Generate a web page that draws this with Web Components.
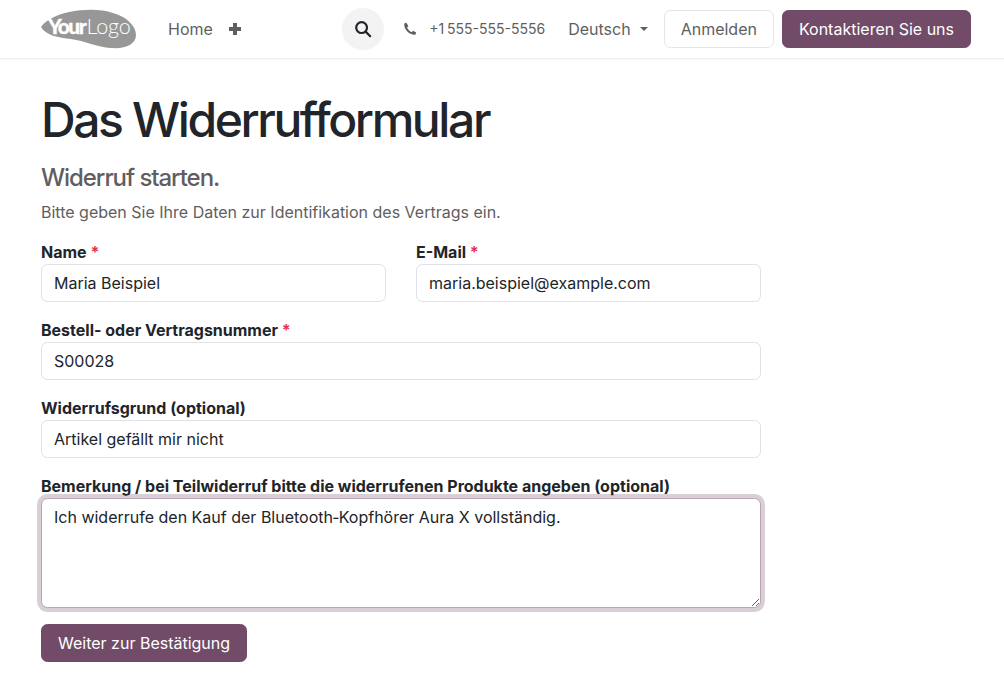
<!DOCTYPE html>
<html lang="de">
<head>
<meta charset="utf-8">
<title>Das Widerrufformular</title>
<style>
  html, body { margin: 0; background: #fff; }
  body { font-family: Inter, "Liberation Sans", sans-serif; color: #212529; }
</style>
</head>
<body>
<site-header></site-header>
<page-main>
  <h-title slot="head"></h-title>
  <form-field label="Name" required value="Maria Beispiel" slot="half"></form-field>
  <form-field label="E-Mail" required value="maria.beispiel@example.com" slot="half"></form-field>
  <form-field label="Bestell- oder Vertragsnummer" required value="S00028"></form-field>
  <form-field label="Widerrufsgrund (optional)" value="Artikel gefällt mir nicht"></form-field>
  <form-field label="Bemerkung / bei Teilwiderruf bitte die widerrufenen Produkte angeben (optional)" multiline value="Ich widerrufe den Kauf der Bluetooth‑Kopfhörer Aura X vollständig."></form-field>
  <brand-button slot="action">Weiter zur Bestätigung</brand-button>
</page-main>

<script>
class BrandButton extends HTMLElement {
  constructor() {
    super();
    this.attachShadow({ mode: 'open' });
    this.shadowRoot.innerHTML = `
      <style>
        :host { display: inline-block; }
        button {
          display: block;
          font: 400 16px/24px Inter, "Liberation Sans", sans-serif;
          height: 38px;
          padding: 0 16px;
          color: #fff;
          background: #714b67;
          border: 1px solid #714b67;
          border-radius: 6.4px;
          white-space: nowrap;
        }
      </style>
      <button type="button"><slot></slot></button>
    `;
  }
}
customElements.define('brand-button', BrandButton);

class SiteHeader extends HTMLElement {
  constructor() {
    super();
    this.attachShadow({ mode: 'open' });
    this.shadowRoot.innerHTML = `
      <style>
        :host {
          display: flex;
          align-items: center;
          box-sizing: border-box;
          height: 59px;
          padding: 0 33px 1px 41px;
          background: #fff;
          border-bottom: 1px solid #eeeeee;
          box-shadow: 0 1px 2px rgba(0, 0, 0, 0.03);
          font-size: 16px;
          color: #5f5e60;
        }
        .logo { display: block; width: 95px; height: 40px; }
        .logo text { font-family: Lato, Roboto, sans-serif; fill: #fff; }
        .home { margin-left: 32px; }
        .plus { margin-left: 15px; display: block; }
        .search {
          margin-left: auto;
          width: 42px;
          height: 42px;
          border-radius: 50%;
          background: #f3f3f3;
          display: flex;
          align-items: center;
          justify-content: center;
        }
        .phone { margin-left: 19px; display: flex; align-items: center; gap: 12px; font-size: 14px; word-spacing: -1px; }
        .lang { margin-left: 23px; display: flex; align-items: center; gap: 9px; }
        .caret { width: 0; height: 0; border: 4px solid transparent; border-top-color: #5f5e60; border-bottom: 0; }
        .login {
          margin-left: 16px;
          box-sizing: border-box;
          height: 38px;
          padding: 0 16px;
          display: flex;
          align-items: center;
          background: #fff;
          border: 1px solid #e5e5e5;
          border-radius: 6.4px;
        }
        brand-button { margin-left: 8px; }
      </style>
      <svg class="logo" viewBox="0 0 95 40" aria-label="Your Logo">
        <path d="M0 18 C4 12 14 6 28 3 C44 0 60 0 72 4 C86 8 95 17 95 26 C95 35 85 40 70 39 C56 38 44 32 30 30 C18 29 4 26 0 18 Z" fill="#979797"/>
        <text x="7" y="25"><tspan font-size="21" font-weight="900" letter-spacing="-1.6" stroke="#fff" stroke-width="0.3">Your</tspan><tspan dx="1.5" font-size="21.5" font-weight="300" letter-spacing="-0.1">Logo</tspan></text>
      </svg>
      <span class="home">Home</span>
      <svg class="plus" width="14" height="14" viewBox="0 0 14 14"><path d="M5 1h4v4h4v4H9v4H5V9H1V5h4z" fill="#5f5e60"/></svg>
      <span class="search">
        <svg width="18" height="18" viewBox="0 0 18 18" fill="none" stroke="#212529" stroke-width="2.2" stroke-linecap="round"><circle cx="7.6" cy="7.6" r="5.4"/><path d="M11.6 11.6l4.6 4.6"/></svg>
      </span>
      <span class="phone">
        <svg width="14" height="14" viewBox="0 0 14 14"><path d="M3.4.8 1.2 1.6C.8 7.6 6.2 13.2 12.4 12.8l.8-2.4-3.2-1.6-1.4 1.4C7 9.4 4.6 7 4 5.4l1.4-1.2z" fill="#5f5e60"/></svg>
        <span>+1 555-555-5556</span>
      </span>
      <span class="lang">Deutsch <i class="caret"></i></span>
      <span class="login">Anmelden</span>
      <brand-button>Kontaktieren Sie uns</brand-button>
    `;
  }
}
customElements.define('site-header', SiteHeader);

class HTitle extends HTMLElement {
  constructor() {
    super();
    this.attachShadow({ mode: 'open' });
    this.shadowRoot.innerHTML = `
      <style>
        :host { display: block; }
        h1 { margin: 0; font-size: 48px; line-height: 58px; font-weight: 500; letter-spacing: -2.4px; color: #212529; }
        h2 { margin: 14px 0 0; font-size: 24px; line-height: 29px; font-weight: 450; letter-spacing: -1.05px; color: #5f5e60; }
        p { margin: 8px 0 0; font-size: 16px; line-height: 24px; color: #5f5e60; }
      </style>
      <h1>Das Widerrufformular</h1>
      <h2>Widerruf starten.</h2>
      <p>Bitte geben Sie Ihre Daten zur Identifikation des Vertrags ein.</p>
    `;
  }
}
customElements.define('h-title', HTitle);

class FormField extends HTMLElement {
  constructor() {
    super();
    this.attachShadow({ mode: 'open' });
  }
  connectedCallback() {
    const label = this.getAttribute('label');
    const star = this.hasAttribute('required') ? ' <b>*</b>' : '';
    const multiline = this.hasAttribute('multiline');
    this.shadowRoot.innerHTML = `
      <style>
        :host { display: block; }
        label { display: block; font-size: 16px; font-weight: 700; line-height: 24px; color: #212529; white-space: nowrap; }
        label b { color: #e6334a; font-weight: 700; }
        input, textarea {
          display: block;
          box-sizing: border-box;
          width: 100%;
          margin: 0;
          font: 400 16px/24px Inter, "DejaVu Sans", sans-serif;
          color: #212529;
          background: #fff;
          border: 1px solid #dee2e6;
          border-radius: 6.4px;
          padding: 6px 12px;
          outline: none;
        }
        input { height: 38px; }
        textarea {
          height: 110px;
          border-color: #b8a5b3;
          box-shadow: 0 0 0 4px #d9cfd6;
        }
      </style>
      <label>${label}${star}</label>
      ${multiline ? '<textarea></textarea>' : '<input type="text">'}
    `;
    const control = this.shadowRoot.querySelector(multiline ? 'textarea' : 'input');
    if (multiline) control.textContent = this.getAttribute('value');
    else control.setAttribute('value', this.getAttribute('value'));
  }
}
customElements.define('form-field', FormField);

class PageMain extends HTMLElement {
  constructor() {
    super();
    this.attachShadow({ mode: 'open' });
    this.shadowRoot.innerHTML = `
      <style>
        :host { display: block; box-sizing: border-box; width: 802px; padding: 32px 41px 0; }
        .form { margin-top: 16px; display: flex; flex-direction: column; gap: 16px; }
        .half { display: grid; grid-template-columns: 1fr 1fr; gap: 30px; }
        .action { margin-top: 16px; }
      </style>
      <slot name="head"></slot>
      <div class="form">
        <div class="half"><slot name="half"></slot></div>
        <slot></slot>
      </div>
      <div class="action"><slot name="action"></slot></div>
    `;
  }
}
customElements.define('page-main', PageMain);
</script>
</body>
</html>
